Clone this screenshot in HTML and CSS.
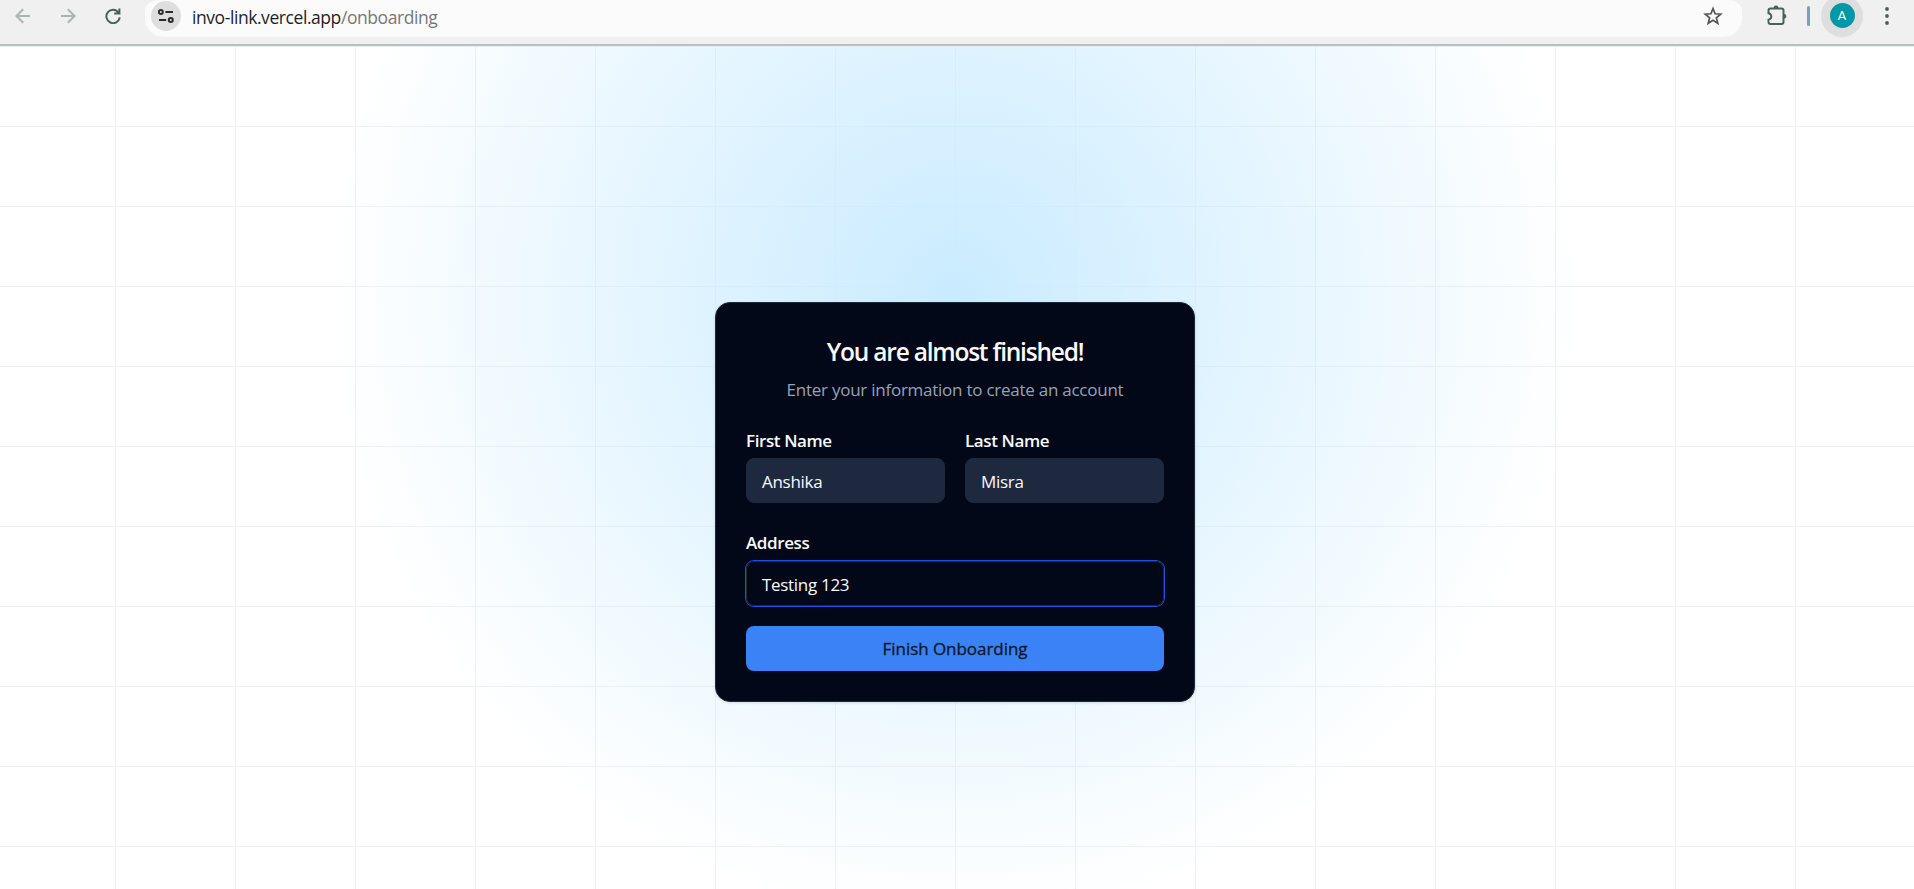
FILE: index.html
```
<!DOCTYPE html>
<html lang="en">
<head>
<meta charset="utf-8">
<title>Onboarding</title>
<link rel="stylesheet" href="styles.css">
</head>
<body>
<header class="toolbar">
  <div class="nav">
    <svg class="nav-icon muted" viewBox="0 0 16 16"><path d="M15 8H1.4M8.2 1.2L1.4 8l6.8 6.8"/></svg>
    <svg class="nav-icon muted" viewBox="0 0 16 16"><path d="M1 8h13.6M7.8 1.2L14.6 8l-6.8 6.8"/></svg>
    <svg class="nav-icon" viewBox="0 0 16 16"><path d="M13.6 4.6A6.7 6.7 0 1 0 14.7 9.400M14.4 0.6V5.6H9.2"/></svg>
  </div>
  <div class="omnibox">
    <span class="site-info">
      <svg width="16" height="16" viewBox="0 0 16 16"><circle cx="2.8" cy="4" r="2"/><path d="M7.4 4H15M1 12h7.2"/><circle cx="12.8" cy="12" r="2"/></svg>
    </span>
    <span class="url">invo-link.vercel.app<span class="path">/onboarding</span></span>
    <svg class="star" viewBox="0 0 20 20"><path d="M10 2.6l2.1 5.2 5.6.4-4.3 3.6 1.4 5.500L10 14.3l-4.8 3 1.4-5.500-4.300-3.600 5.600-.400z"/></svg>
  </div>
  <div class="actions">
    <svg class="puzzle" viewBox="0 0 22 22"><path d="M4.5 3.500H15.500Q17.500 3.500 17.500 5.500V17Q17.500 19 15.500 19H4.500Q2.500 19 2.500 17V14.700Q5.300 14 5.300 11.500T2.500 8.300V5.500Q2.500 3.500 4.500 3.500Z"/><path class="solid" d="M7.600 3a2.400 2.400 0 0 1 4.800 0zM18 8.900a2.400 2.400 0 0 1 0 4.800z"/></svg>
    <span class="divider"></span>
    <span class="profile"><span class="avatar">A</span></span>
    <svg class="menu" viewBox="0 0 4 18"><circle cx="2" cy="2" r="1.900"/><circle cx="2" cy="9" r="1.900"/><circle cx="2" cy="16" r="1.900"/></svg>
  </div>
</header>
<main class="page">
  <form class="card">
    <h1 class="title">You are almost finished!</h1>
    <p class="subtitle">Enter your information to create an account</p>
    <div class="row">
      <label class="field"><span class="label">First Name</span><span class="input filled">Anshika</span></label>
      <label class="field"><span class="label">Last Name</span><span class="input filled">Misra</span></label>
    </div>
    <label class="field address"><span class="label">Address</span><span class="input focused">Testing 123</span></label>
    <button class="submit" type="button">Finish Onboarding</button>
  </form>
</main>
</body>
</html>
```

FILE: styles.css
```
* { box-sizing: border-box; }
body { margin: 0; height: 889px; overflow: hidden; display: flex; flex-direction: column; font-family: "Open Sans", "Noto Sans", sans-serif; background: #fff; }
svg { display: block; flex: none; fill: none; stroke: #4b6158; stroke-width: 2; }

.toolbar { height: 47px; flex: none; display: flex; background: #f0f0f0; border-bottom: 1px solid #eceeee; box-shadow: inset 0 -2px #b9c1c0; }
.nav { width: 145px; height: 31px; padding-left: 15px; display: flex; align-items: center; gap: 29px; }
.nav-icon { width: 16px; height: 16px; }
.nav-icon.muted { stroke: #aab5b0; }
.omnibox { width: 1597px; height: 37px; padding: 0 19px 5px 6px; display: flex; align-items: center; background: #fbfbfb; border-radius: 16px 16px 19px 19px / 10px 10px 19px 19px; }
.site-info { width: 30px; height: 30px; border-radius: 50%; background: #dedede; display: grid; place-items: center; }
.site-info svg { stroke: #2b2b2b; }
.url { margin-left: 11px; padding-top: 2px; font-size: 17.5px; line-height: 30px; color: #1f1f1f; letter-spacing: -0.43px; }
.path { color: #777; }
.star { width: 20px; height: 20px; margin-left: auto; stroke: #555; stroke-width: 1.7; }
.actions { flex: 1; height: 31px; display: flex; align-items: center; }
.puzzle { width: 22px; height: 22px; margin-left: 24px; }
.puzzle .solid { fill: #4b6158; stroke: none; }
.divider { width: 3px; height: 20px; margin-left: 19px; border-radius: 2px; background: #78a3ae; }
.profile { width: 42px; height: 42px; margin-left: 11px; border-radius: 50%; background: #dedede; display: grid; place-items: center; }
.avatar { width: 25px; height: 25px; border-radius: 50%; background: #0097a7; color: #fff; font: 13.5px/25px Roboto, sans-serif; text-align: center; }
.menu { width: 4px; height: 18px; margin-left: 22px; fill: #4b6158; stroke: none; }

.page { flex: 1; padding: 255px 0 0 715px; background:
  radial-gradient(circle 625px at 955px 249px, #c9ebff, transparent),
  linear-gradient(to right, #f0f0f0 1px, transparent 1px) -5px 0 / 120px 80px,
  linear-gradient(to bottom, #f0f0f0 1px, transparent 1px) 0 -1px / 120px 80px; }
.card { width: 480px; height: 400px; padding: 31px 30px 30px; border: 1px solid #1e293b; border-radius: 15px; background: #020817; color: #f8fafc; box-shadow: 0 1px 3px rgba(0,0,0,.12); }
.title { margin: 0; font-size: 24.5px; line-height: 35px; font-weight: 600; text-align: center; letter-spacing: -1.22px; }
.subtitle { margin: 8px 0 0; font-size: 17px; line-height: 25px; text-align: center; color: #94a3b8; letter-spacing: -0.25px; }
.row { display: grid; grid-template-columns: 1fr 1fr; gap: 20px; margin-top: 27px; }
.field { display: flex; flex-direction: column; gap: 5px; }
.label { font-size: 17px; line-height: 24px; font-weight: 600; letter-spacing: -0.4px; }
.input { height: 45px; border: 1px solid #1e293b; border-radius: 8px; padding: 0 15px; font-size: 17px; line-height: 45px; letter-spacing: -0.3px; }
.filled { background: #1e293f; }
.focused { box-shadow: 0 0 0 1px #1d4fe0; }
.address { margin-top: 28px; gap: 6px; }
.submit { display: block; width: 100%; height: 45px; margin-top: 20px; padding: 1px 0 0; border: 0; border-radius: 8px; background: #3b82f6; color: #0f172a; font: 500 17px/44px "Open Sans", "Noto Sans", sans-serif; letter-spacing: -0.05px; -webkit-text-stroke: 0.3px #0f172a; }
```
